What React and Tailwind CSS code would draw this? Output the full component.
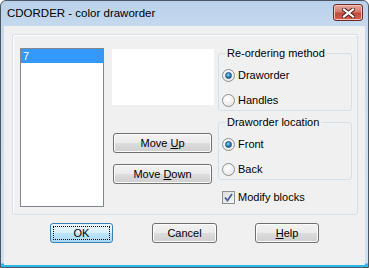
const font = { fontFamily: '"Liberation Sans", Arial, sans-serif' }

function Btn({ children, className = "", isDefault = false }) {
  return (
    <div
      className={
        "flex items-center justify-center h-[20px] rounded-[3px] border text-[11px] text-black " +
        (isDefault
          ? "border-[#3c7fb1] bg-[linear-gradient(to_bottom,#eaf6fd_0%,#d9f0fc_50%,#bee6fd_50%,#a7d9f5_100%)] p-[2px] "
          : "border-[#707070] bg-[linear-gradient(to_bottom,#f2f2f2_0%,#ebebeb_50%,#dddddd_50%,#cfcfcf_100%)] shadow-[inset_0_0_0_1px_#fcfcfc] ") +
        className
      }
    >
      {isDefault ? (
        <div className="w-full h-full flex items-center justify-center border border-dotted border-black">
          {children}
        </div>
      ) : (
        children
      )}
    </div>
  )
}

function Radio({ checked, label }) {
  return (
    <div className="flex items-center h-[13px] ml-[3px]">
      <div className="w-[13px] h-[13px] rounded-full border border-[#8e8f8f] bg-[radial-gradient(circle_at_40%_35%,#ffffff,#e2e2e2)] flex items-center justify-center">
        {checked && (
          <div className="w-[7px] h-[7px] rounded-full bg-[radial-gradient(circle_at_40%_35%,#7fd0f8,#1a6aa0_70%,#0e4a78)] border border-[#1b5480]" />
        )}
      </div>
      <span className="ml-[3px] text-[11px] leading-[13px] text-black">{label}</span>
    </div>
  )
}

function Group({ label, children, className = "" }) {
  return (
    <fieldset className={"border border-[#d5dfe5] rounded-[3px] px-[0px] " + className}>
      <legend className="ml-[6px] px-[2px] text-[11px] leading-[13px] text-black">{label}</legend>
      {children}
    </fieldset>
  )
}

export default function App() {
  return (
    <div
      className="w-[369px] h-[268px] border border-[#4b5663] rounded-t-[6px] overflow-hidden flex flex-col bg-[linear-gradient(to_bottom,#b9d1ea_0px,#c6d9ee_26px,#cfe0f2_200px,#cfe0f2_262px,#2fb6e8_263px)]"
      style={font}
    >
      <div className="h-[25px] flex items-center justify-between shrink-0">
        <span className="ml-[6px] text-[11.5px] text-black">CDORDER - color draworder</span>
        <div className="mr-[5px] mt-[-2px] w-[30px] h-[17px] rounded-[3px] border border-[#6d2a26] bg-[linear-gradient(to_bottom,#e8a89c_0%,#d47a6c_45%,#c14a3a_55%,#d3604c_100%)] flex items-center justify-center shadow-[inset_0_0_0_1px_#f0c4bc]">
          <svg width="13" height="10" viewBox="0 0 13 10">
            <path d="M2 1.5 L11 8.5 M11 1.5 L2 8.5" stroke="#4a1c18" strokeWidth="4" strokeLinecap="square" />
            <path d="M2 1.5 L11 8.5 M11 1.5 L2 8.5" stroke="#ffffff" strokeWidth="2.2" strokeLinecap="square" />
          </svg>
        </div>
      </div>
      <div className="flex-1 mx-[3px] mb-[2px] bg-[#f0f0f0] flex flex-col">
        <div className="ml-[8px] mt-[8px] w-[346px] h-[181px] border border-[#d5dfe5] rounded-[3px] shadow-[inset_1px_1px_0_#fff] flex pl-[7px] pt-[13px]">
          <div className="w-[84px] h-[159px] border border-[#828790] bg-white">
            <div className="h-[14px] bg-[#3399ff] text-white text-[11px] leading-[14px] pl-[2px]">7</div>
          </div>
          <div className="ml-[8px] w-[102px] flex flex-col">
            <div className="h-[56px] bg-white mt-[1px]" />
            <Btn className="ml-[1px] w-[99px] mt-[28px]">
              <span>Move <u>U</u>p</span>
            </Btn>
            <Btn className="ml-[1px] w-[99px] mt-[11px]">
              <span>Move <u>D</u>own</span>
            </Btn>
          </div>
          <div className="ml-[4px] w-[134px] flex flex-col mt-[-1px]">
            <Group label="Re-ordering method" className="h-[64px]">
              <div className="pt-[9px] flex flex-col gap-[12px]">
                <Radio checked label="Draworder" />
                <Radio label="Handles" />
              </div>
            </Group>
            <Group label="Draworder location" className="h-[64px] mt-[5px]">
              <div className="pt-[9px] flex flex-col gap-[12px]">
                <Radio checked label="Front" />
                <Radio label="Back" />
              </div>
            </Group>
            <div className="flex items-center mt-[11px] ml-[4px]">
              <div className="w-[13px] h-[13px] border border-[#8e8f8f] bg-[linear-gradient(135deg,#dcdcdc,#f6f6f6)] flex items-center justify-center">
                <svg width="9" height="9" viewBox="0 0 9 9">
                  <path d="M1 4.5 L3.5 7.5 L8 1" stroke="#4a5f97" strokeWidth="1.8" fill="none" />
                </svg>
              </div>
              <span className="ml-[3px] text-[11px] leading-[13px] text-black">Modify blocks</span>
            </div>
          </div>
        </div>
        <div className="flex mt-[8px] ml-[46px]">
          <Btn isDefault className="w-[63px]">OK</Btn>
          <Btn className="w-[65px] ml-[39px]">Cancel</Btn>
          <Btn className="w-[64px] ml-[38px]">
            <span><u>H</u>elp</span>
          </Btn>
        </div>
      </div>
    </div>
  )
}
